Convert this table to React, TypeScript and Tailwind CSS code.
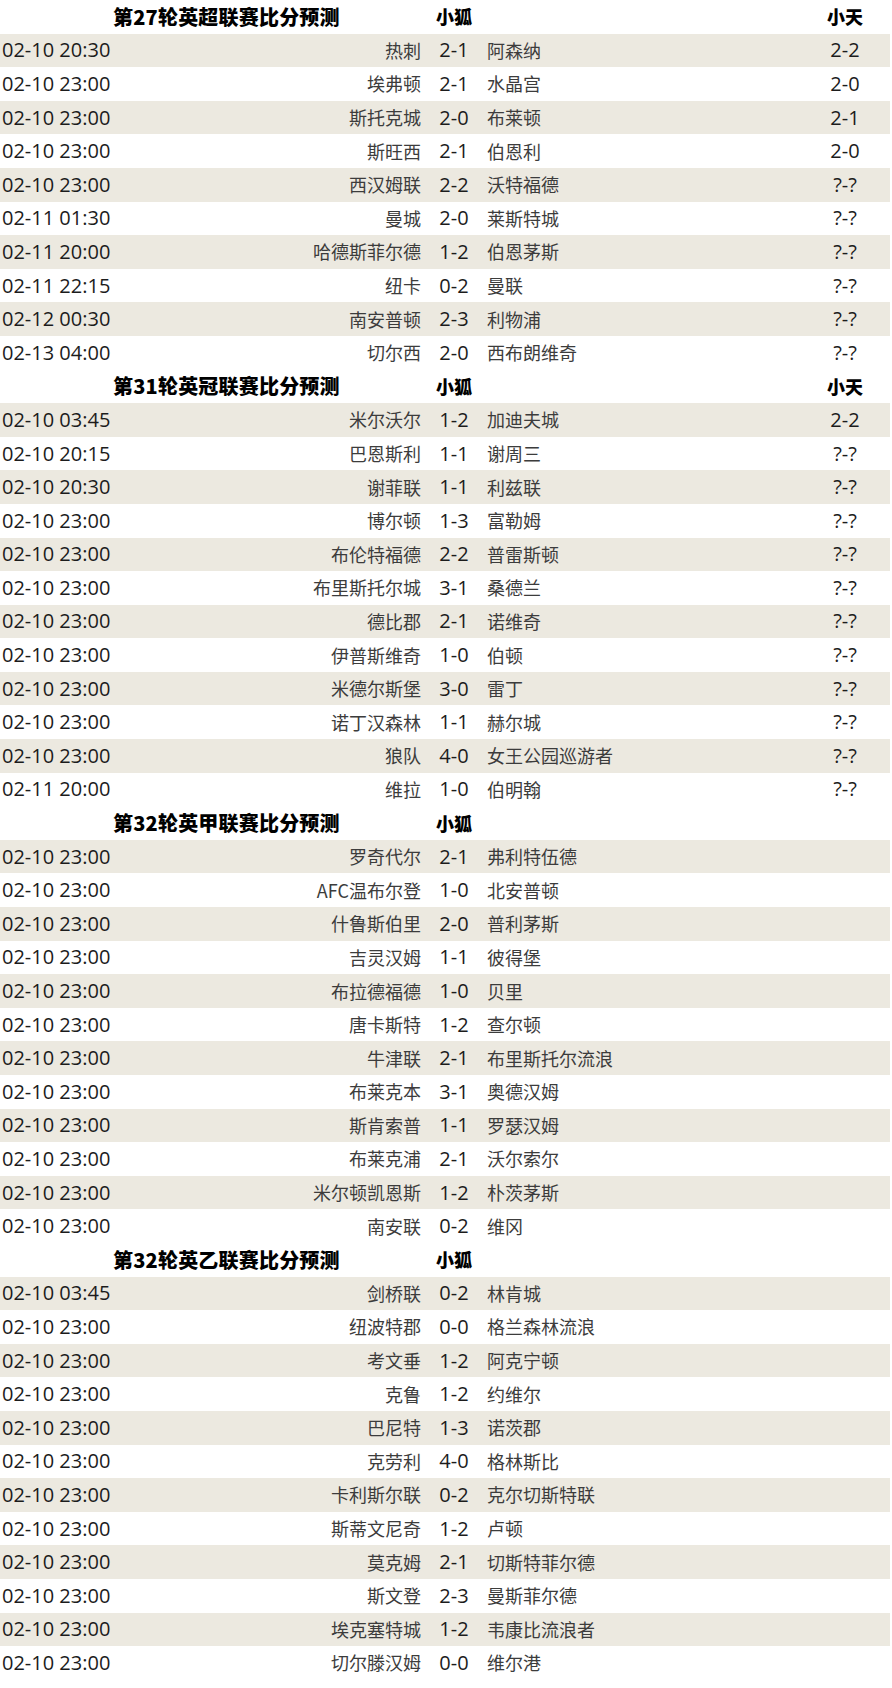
type Match = [string, string, string, string, string?];

interface Section {
  title: string;
  showTian: boolean;
  matches: Match[];
}

const SECTIONS: Section[] = [
  {
    title: '第27轮英超联赛比分预测',
    showTian: true,
    matches: [
      ['02-10 20:30', '热刺', '2-1', '阿森纳', '2-2'],
      ['02-10 23:00', '埃弗顿', '2-1', '水晶宫', '2-0'],
      ['02-10 23:00', '斯托克城', '2-0', '布莱顿', '2-1'],
      ['02-10 23:00', '斯旺西', '2-1', '伯恩利', '2-0'],
      ['02-10 23:00', '西汉姆联', '2-2', '沃特福德', '?-?'],
      ['02-11 01:30', '曼城', '2-0', '莱斯特城', '?-?'],
      ['02-11 20:00', '哈德斯菲尔德', '1-2', '伯恩茅斯', '?-?'],
      ['02-11 22:15', '纽卡', '0-2', '曼联', '?-?'],
      ['02-12 00:30', '南安普顿', '2-3', '利物浦', '?-?'],
      ['02-13 04:00', '切尔西', '2-0', '西布朗维奇', '?-?'],
    ],
  },
  {
    title: '第31轮英冠联赛比分预测',
    showTian: true,
    matches: [
      ['02-10 03:45', '米尔沃尔', '1-2', '加迪夫城', '2-2'],
      ['02-10 20:15', '巴恩斯利', '1-1', '谢周三', '?-?'],
      ['02-10 20:30', '谢菲联', '1-1', '利兹联', '?-?'],
      ['02-10 23:00', '博尔顿', '1-3', '富勒姆', '?-?'],
      ['02-10 23:00', '布伦特福德', '2-2', '普雷斯顿', '?-?'],
      ['02-10 23:00', '布里斯托尔城', '3-1', '桑德兰', '?-?'],
      ['02-10 23:00', '德比郡', '2-1', '诺维奇', '?-?'],
      ['02-10 23:00', '伊普斯维奇', '1-0', '伯顿', '?-?'],
      ['02-10 23:00', '米德尔斯堡', '3-0', '雷丁', '?-?'],
      ['02-10 23:00', '诺丁汉森林', '1-1', '赫尔城', '?-?'],
      ['02-10 23:00', '狼队', '4-0', '女王公园巡游者', '?-?'],
      ['02-11 20:00', '维拉', '1-0', '伯明翰', '?-?'],
    ],
  },
  {
    title: '第32轮英甲联赛比分预测',
    showTian: false,
    matches: [
      ['02-10 23:00', '罗奇代尔', '2-1', '弗利特伍德'],
      ['02-10 23:00', 'AFC温布尔登', '1-0', '北安普顿'],
      ['02-10 23:00', '什鲁斯伯里', '2-0', '普利茅斯'],
      ['02-10 23:00', '吉灵汉姆', '1-1', '彼得堡'],
      ['02-10 23:00', '布拉德福德', '1-0', '贝里'],
      ['02-10 23:00', '唐卡斯特', '1-2', '查尔顿'],
      ['02-10 23:00', '牛津联', '2-1', '布里斯托尔流浪'],
      ['02-10 23:00', '布莱克本', '3-1', '奥德汉姆'],
      ['02-10 23:00', '斯肯索普', '1-1', '罗瑟汉姆'],
      ['02-10 23:00', '布莱克浦', '2-1', '沃尔索尔'],
      ['02-10 23:00', '米尔顿凯恩斯', '1-2', '朴茨茅斯'],
      ['02-10 23:00', '南安联', '0-2', '维冈'],
    ],
  },
  {
    title: '第32轮英乙联赛比分预测',
    showTian: false,
    matches: [
      ['02-10 03:45', '剑桥联', '0-2', '林肯城'],
      ['02-10 23:00', '纽波特郡', '0-0', '格兰森林流浪'],
      ['02-10 23:00', '考文垂', '1-2', '阿克宁顿'],
      ['02-10 23:00', '克鲁', '1-2', '约维尔'],
      ['02-10 23:00', '巴尼特', '1-3', '诺茨郡'],
      ['02-10 23:00', '克劳利', '4-0', '格林斯比'],
      ['02-10 23:00', '卡利斯尔联', '0-2', '克尔切斯特联'],
      ['02-10 23:00', '斯蒂文尼奇', '1-2', '卢顿'],
      ['02-10 23:00', '莫克姆', '2-1', '切斯特菲尔德'],
      ['02-10 23:00', '斯文登', '2-3', '曼斯菲尔德'],
      ['02-10 23:00', '埃克塞特城', '1-2', '韦康比流浪者'],
      ['02-10 23:00', '切尔滕汉姆', '0-0', '维尔港'],
    ],
  },
];

const NUM_FONT = 'font-["Open_Sans","Noto_Sans_CJK_SC",sans-serif]';
const CJK_FONT = 'font-["Noto_Sans_CJK_SC",sans-serif]';

function HeaderRow({ title, showTian }: { title: string; showTian: boolean }) {
  return (
    <div className={`flex items-center h-[33.6px] w-[890px] text-black ${CJK_FONT}`}>
      <div className="w-[421px] pl-[113px] text-[20px] font-black tracking-[0.2px] whitespace-nowrap">
        {title}
      </div>
      <div className="w-[66px] text-center text-[18px] font-black">小狐</div>
      <div className="w-[318px]" />
      <div className="w-[80px] text-center text-[18px] font-black">{showTian ? '小天' : ''}</div>
    </div>
  );
}

function MatchRow({ match, shaded }: { match: Match; shaded: boolean }) {
  const [time, home, score, away, tian] = match;
  return (
    <div className={`flex items-center h-[33.6px] w-[890px] ${shaded ? 'bg-[#ece9e0]' : 'bg-white'}`}>
      <div className={`w-[200px] pl-[2px] text-[20px] text-[#1c1c1c] ${NUM_FONT}`}>{time}</div>
      <div className={`w-[221px] text-right text-[18px] text-[#3c3c3c] whitespace-nowrap ${CJK_FONT}`}>{home}</div>
      <div className={`w-[66px] text-center text-[20px] text-[#1c1c1c] ${NUM_FONT}`}>{score}</div>
      <div className={`w-[318px] text-[18px] text-[#3c3c3c] whitespace-nowrap ${CJK_FONT}`}>{away}</div>
      <div className={`w-[80px] text-center text-[20px] text-[#1c1c1c] ${NUM_FONT}`}>{tian ?? ''}</div>
    </div>
  );
}

export default function App() {
  return (
    <div className="w-[892px] h-[1688px] bg-white overflow-hidden">
      {SECTIONS.map(section => (
        <div key={section.title}>
          <HeaderRow title={section.title} showTian={section.showTian} />
          {section.matches.map((m, i) => (
            <MatchRow key={i} match={m} shaded={i % 2 === 0} />
          ))}
        </div>
      ))}
    </div>
  );
}
